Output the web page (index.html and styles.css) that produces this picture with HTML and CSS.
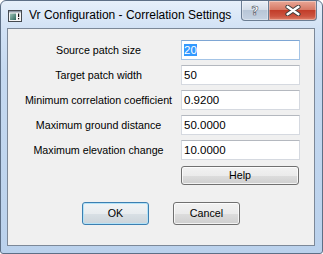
FILE: index.html
```html
<!DOCTYPE html>
<html lang="en">
<head>
  <meta charset="UTF-8">
  <title>Vr Configuration - Correlation Settings</title>
  <link rel="stylesheet" href="styles.css">
</head>
<body>
  <div class="window">
    <div class="titlebar">
      <div class="app">
        <svg class="app-icon" viewBox="0 0 16 16" width="16" height="16">
          <defs>
            <linearGradient id="pane" x1="0" y1="0" x2="1" y2="1">
              <stop offset="0" stop-color="#9cc2b6"/>
              <stop offset="1" stop-color="#2f6a5e"/>
            </linearGradient>
          </defs>
          <rect x="1.5" y="3.5" width="13" height="11" fill="#f6f6f6" stroke="#454a50"/>
          <rect x="2" y="4" width="12" height="1.5" fill="#8d99a6"/>
          <rect x="3" y="6.5" width="6" height="6.5" fill="url(#pane)"/>
          <rect x="11" y="6.5" width="1.2" height="3.5" fill="#111"/>
          <rect x="11" y="11" width="1.2" height="1.3" fill="#111"/>
        </svg>
        <span class="title">Vr Configuration - Correlation Settings</span>
      </div>
      <div class="caption">
        <div class="cap cap-help"><span>?</span></div>
        <div class="cap cap-close">
          <svg viewBox="0 0 16 11" width="16" height="11">
            <path d="M2.5 1.8 L8 5.5 L13.5 1.8 M2.5 9.2 L8 5.5 L13.5 9.2" fill="none" stroke="#3b3b3b" stroke-width="4.2" stroke-linecap="round"/>
            <path d="M2.5 1.8 L8 5.5 L13.5 1.8 M2.5 9.2 L8 5.5 L13.5 9.2" fill="none" stroke="#ffffff" stroke-width="2.4" stroke-linecap="round"/>
          </svg>
        </div>
      </div>
    </div>

    <div class="client">
      <div class="form">
        <div class="label">Source patch size</div>
        <div class="field focused"><span class="selected">20</span></div>

        <div class="label">Target patch width</div>
        <div class="field">50</div>

        <div class="label">Minimum correlation coefficient</div>
        <div class="field">0.9200</div>

        <div class="label">Maximum ground distance</div>
        <div class="field">50.0000</div>

        <div class="label">Maximum elevation change</div>
        <div class="field">10.0000</div>

        <div></div>
        <div class="button help-button">Help</div>
      </div>

      <div class="actions">
        <div class="button default">OK</div>
        <div class="button">Cancel</div>
      </div>
    </div>
  </div>
</body>
</html>
```

FILE: styles.css
```css
* {
  box-sizing: border-box;
}

html, body {
  margin: 0;
  padding: 0;
}

body {
  width: 323px;
  height: 254px;
  overflow: hidden;
  background: #ffffff;
  font-family: "Liberation Sans", Arial, sans-serif;
  color: #000;
}

.window {
  width: 323px;
  height: 254px;
  border: 1px solid #5d6f86;
  border-radius: 6px 6px 3px 3px;
  background: linear-gradient(to bottom, #e6effa 0, #d2e2f5 27px, #c5d9f0 70px, #bad1ec 100%);
  display: flex;
  flex-direction: column;
}

/* title bar */
.titlebar {
  height: 27px;
  display: flex;
  align-items: flex-start;
  padding: 0 5px 0 6px;
}

.app {
  display: flex;
  align-items: center;
  gap: 6px;
  margin-top: 6px;
}

.app-icon {
  display: block;
}

.title {
  font-size: 12px;
  line-height: 16px;
  white-space: nowrap;
}

.caption {
  margin-left: auto;
  display: flex;
}

.cap {
  height: 20px;
  border: 1px solid #6b7d93;
  border-top: none;
  display: flex;
  align-items: center;
  justify-content: center;
  box-shadow: inset 0 0 0 1px rgba(255, 255, 255, 0.35);
}

.cap-help {
  width: 28px;
  border-radius: 0 0 0 4px;
  background: linear-gradient(to bottom, #e9eff7 0%, #d5dee9 45%, #b8c6d7 50%, #c5d2e2 100%);
}

.cap-help span {
  font-family: "DejaVu Sans", sans-serif;
  font-weight: bold;
  font-size: 13px;
  line-height: 14px;
  color: #ffffff;
  -webkit-text-stroke: 0.6px #505a66;
}

.cap-close {
  width: 48px;
  border-left: none;
  border-radius: 0 0 4px 0;
  background: linear-gradient(to bottom, #e9a796 0%, #d77a66 45%, #c23d29 50%, #cc5440 80%, #de8068 100%);
}

.cap-close svg {
  display: block;
  margin-top: -1px;
}

/* client area */
.client {
  flex: 1;
  margin: 0 7px 7px 6px;
  border: 1px solid #7c8898;
  background: #f0f0f0;
  display: flex;
  flex-direction: column;
  padding-top: 11px;
}

.form {
  display: grid;
  grid-template-columns: 165px 119px;
  row-gap: 5px;
  align-items: center;
  margin-left: 8px;
}

.label {
  font-size: 10.7px;
  text-align: center;
  white-space: nowrap;
}

.field {
  height: 20px;
  border: 1px solid #d5d9e0;
  border-top-color: #b4b8bf;
  background: #ffffff;
  padding: 1px 3px 0 2px;
  font-size: 11.5px;
  line-height: 17px;
  white-space: nowrap;
}

.field.focused {
  border-color: #a4c4e6;
  border-top-color: #7ea6d4;
}

.selected {
  background: #3399ff;
  color: #ffffff;
}

.button {
  height: 23px;
  border: 1px solid #707070;
  border-radius: 3px;
  background: linear-gradient(to bottom, #f2f2f2 0%, #ebebeb 50%, #dddddd 51%, #cfcfcf 100%);
  box-shadow: inset 0 0 0 1px rgba(255, 255, 255, 0.75);
  font-size: 10.7px;
  line-height: 21px;
  text-align: center;
}

.help-button {
  width: 118px;
  height: 19px;
  line-height: 17px;
  margin-top: 1px;
}

.button.default {
  border-color: #3c7fb1;
  box-shadow: inset 0 0 0 1px #b3e2f7;
  background: linear-gradient(to bottom, #f1f4f6 0%, #e8ecef 50%, #d9e0e5 51%, #ccd4da 100%);
}

.actions {
  display: flex;
  justify-content: center;
  gap: 24px;
  margin-top: 17px;
}

.actions .button {
  width: 67px;
}
```
